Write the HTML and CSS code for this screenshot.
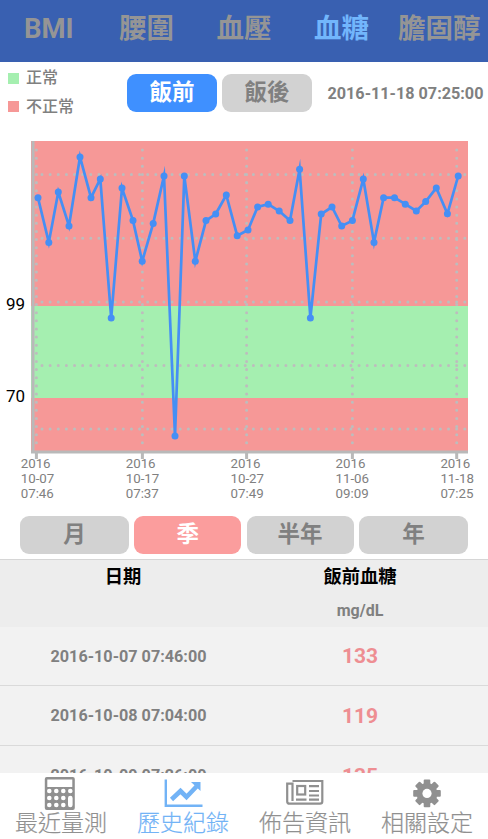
FILE: index.html
```html
<!DOCTYPE html>
<html lang="zh-Hant">
<head>
<meta charset="utf-8">
<title>血糖</title>
<link rel="stylesheet" href="styles.css">
</head>
<body>
<div class="app">
  <header class="tabs">
    <span class="tab tab-latin">BMI</span><span class="tab">腰圍</span><span class="tab">血壓</span><span class="tab active">血糖</span><span class="tab">膽固醇</span>
  </header>
  <section class="filter">
    <div class="legend">
      <div class="key"><i class="swatch ok"></i>正常</div>
      <div class="key"><i class="swatch bad"></i>不正常</div>
    </div>
    <div class="meal">
      <button class="btn blue">飯前</button>
      <button class="btn">飯後</button>
    </div>
    <div class="stamp">2016-11-18 07:25:00</div>
  </section>
  <svg class="chart" viewBox="0 130 488 374" width="488" height="374">
    <rect x="31" y="141" width="437" height="311" fill="#f69897"/>
    <rect x="31" y="306" width="437" height="92" fill="#a5efb0"/>
    <g class="grid">
      <path d="M42 174.5H468M42 238.3H468M42 302H468M42 365.5H468M42 429H468"/>
      <path d="M36.4 150.1V448M142.4 150.1V448M246.6 150.1V448M352.4 150.1V448M456.7 150.1V448"/>
    </g>
    <path d="M33 141V453M31 452H468" class="axis"/>
    <path d="M36.4 452V459M142.4 452V459M246.6 452V459M352.4 452V459M456.7 452V459" class="tick"/>
    <defs><marker id="dot" viewBox="-4 -4 8 8" markerWidth="8" markerHeight="8" markerUnits="userSpaceOnUse"><circle r="3.5" fill="#458ff5"/></marker></defs>
    <polyline class="line" points="38,197.7 48.8,242.4 58.3,192 69,226 80,157 91,197.7 100.3,179 111.2,318 122,188 133,220.6 142.2,261.3 153.2,223.4 164,176 175,436 184.3,176 195.3,261.3 206,220.6 215.7,214 226.3,195 237.2,235.7 248,230 257.6,207 268.2,204.2 279.2,211 290,220.6 299.6,169.2 310.4,318 321.2,214 332,207 341.7,226 352.4,220.6 363.3,179 374,242.4 383.6,197.7 394.5,197.7 405.3,204.2 416.3,211 425.7,201.6 436.3,188 447.4,213.8 458.2,176"/>
    <g class="ylab"><text x="6" y="309.7">99</text><text x="6" y="402">70</text></g>
    <g class="xlab">
      <text x="20.7" y="468.3">2016</text><text x="20.7" y="483.3">10-07</text><text x="20.7" y="498.3">07:46</text>
      <text x="125.7" y="468.3">2016</text><text x="125.7" y="483.3">10-17</text><text x="125.7" y="498.3">07:37</text>
      <text x="230.5" y="468.3">2016</text><text x="230.5" y="483.3">10-27</text><text x="230.5" y="498.3">07:49</text>
      <text x="335.5" y="468.3">2016</text><text x="335.5" y="483.3">11-06</text><text x="335.5" y="498.3">09:09</text>
      <text x="440.4" y="468.3">2016</text><text x="440.4" y="483.3">11-18</text><text x="440.4" y="498.3">07:25</text>
    </g>
  </svg>
  <div class="ranges">
    <button class="btn">月</button><button class="btn pink">季</button><button class="btn">半年</button><button class="btn">年</button>
  </div>
  <div class="thead">
    <div class="c1">日期</div>
    <div class="c2">飯前血糖<small>mg/dL</small></div>
  </div>
  <div class="rows">
    <div class="row"><span class="date">2016-10-07 07:46:00</span><span class="val">133</span></div>
    <div class="row"><span class="date">2016-10-08 07:04:00</span><span class="val">119</span></div>
    <div class="row"><span class="date">2016-10-09 07:26:00</span><span class="val">135</span></div>
  </div>
  <nav class="nav">
    <div class="item">
      <svg width="40" height="36" viewBox="0 0 40 36"><g transform="translate(-1.200 0)"><path fill="#909090" fill-rule="evenodd" d="M7 4h26a2 2 0 0 1 2 2v29a2 2 0 0 1-2 2H7a2 2 0 0 1-2-2V6a2 2 0 0 1 2-2ZM7.500 6.500v7.500h25v-7.500Z"/><g fill="#fff"><circle cx="9.500" cy="18" r="2.300"/><circle cx="16.500" cy="18" r="2.300"/><circle cx="23.500" cy="18" r="2.300"/><circle cx="30.500" cy="18" r="2.300"/><circle cx="9.500" cy="25" r="2.300"/><circle cx="16.500" cy="25" r="2.300"/><circle cx="23.500" cy="25" r="2.300"/><circle cx="9.500" cy="32" r="2.300"/><circle cx="16.500" cy="32" r="2.300"/><circle cx="23.500" cy="32" r="2.300"/><rect x="28.200" y="22.700" width="4.600" height="11.600" rx="2.300"/></g></g></svg>
      <span>最近量測</span>
    </div>
    <div class="item on">
      <svg width="40" height="36" viewBox="0 0 40 36"><path d="M2.800 6.500V32.700H39.500" fill="none" stroke="#72b3f6" stroke-width="2.400"/><path d="M8.500 26.500 17.500 18 23.500 24 33.500 13.500" fill="none" stroke="#72b3f6" stroke-width="4.600"/><path d="M28 9H37.500V18Z" fill="#72b3f6"/></svg>
      <span>歷史紀錄</span>
    </div>
    <div class="item">
      <svg width="40" height="36" viewBox="0 0 40 36"><g fill="none" stroke="#909090" stroke-width="2.200"><path d="M7.500 8H37.300V28.500Q37.300 30.700 35 30.700H4.500Q2.200 30.700 2.200 28.500V10.700H7.500V28"/><rect x="12.200" y="13" width="8" height="8.500"/><path d="M24 13.200H34M24 18H34M24 22.500H34M11 26.600H21.500M24 26.600H34"/></g></svg>
      <span>佈告資訊</span>
    </div>
    <div class="item">
      <svg width="40" height="36" viewBox="0 0 40 36"><g transform="translate(20 20.400)" fill="#909090"><g id="teeth"><rect x="-3.300" y="-13.800" width="6.600" height="27.600" rx="1"/><rect x="-3.300" y="-13.800" width="6.600" height="27.600" rx="1" transform="rotate(45)"/><rect x="-3.300" y="-13.800" width="6.600" height="27.600" rx="1" transform="rotate(90)"/><rect x="-3.300" y="-13.800" width="6.600" height="27.600" rx="1" transform="rotate(135)"/></g><circle r="10.500"/><circle r="4.600" fill="#fff"/></g></svg>
      <span>相關設定</span>
    </div>
  </nav>
</div>
</body>
</html>
```
FILE: styles.css
```css
* { box-sizing: border-box; }
body { margin: 0; font-family: Roboto, "Noto Sans CJK TC", sans-serif; background: #fff; color: #808080; }
.app { width: 488px; height: 839px; overflow: hidden; display: flex; flex-direction: column; }
.tabs { height: 62px; flex: none; display: grid; grid-template-columns: repeat(5, 1fr); background: #3960b1; padding-top: 9px; }
.tab { text-align: center; font-size: 27.5px; line-height: 40px; font-weight: 700; color: #959595; white-space: nowrap; }
.tab.active { color: #72b6fc; }
.filter { height: 68px; flex: none; display: flex; position: relative; }
.legend { width: 127px; padding: 2px 0 0 8px; }
.key { display: flex; align-items: center; height: 28.500px; font-size: 16px; font-weight: 500; line-height: 28px; }
.swatch { width: 11px; height: 11px; margin-right: 7px; }
.swatch.ok { background: #a5efb0; }
.swatch.bad { background: #f69897; }
.meal { display: flex; gap: 5px; padding-top: 12px; }
.btn { border: 0; border-radius: 9px; background: #d2d2d2; color: #808080; font: 700 22.5px/34px Roboto, "Noto Sans CJK TC", sans-serif; height: 38px; padding: 0 0 3px; }
.meal .btn { width: 90px; }
.btn.blue { background: #3f90ff; color: #fff; }
.btn.pink { background: #fb9d9d; color: #fff; }
.stamp { margin-left: 15.500px; padding-top: 22px; font-size: 16.200px; line-height: 20px; font-weight: 700; white-space: nowrap; }
.chart { display: block; flex: none; }
.grid { fill: none; stroke: #bdbdbd; stroke-width: 3; stroke-linecap: round; stroke-dasharray: 0.010 8.120; }
.axis { fill: none; stroke: #b9b9b9; stroke-width: 3; }
.tick { stroke: #b9b9b9; stroke-width: 3; }
.line { fill: none; stroke: #458ff5; stroke-width: 2.700; stroke-miterlimit: 10; marker-start: url(#dot); marker-mid: url(#dot); marker-end: url(#dot); }
.ylab { font-size: 17px; fill: #000; }
.xlab { font-size: 13.300px; fill: #808080; }
.ranges { height: 55px; flex: none; display: grid; grid-template-columns: 109px 107px 107px 109px; column-gap: 5.300px; padding: 12px 20px 0; }
.thead { height: 68px; flex: none; background: #ededed; border-top: 1px solid #d6d6d6; display: grid; grid-template-columns: 232px 256px; color: #000; font-size: 18.300px; line-height: 26px; font-weight: 700; text-align: center; padding-top: 4px; }
.c1 { padding-left: 14px; }
.c2 small { display: block; font-size: 16px; line-height: 20px; margin-top: 11px; color: #808080; }
.rows { height: 146px; flex: none; overflow: hidden; background: #f2f2f2; }
.row { height: 60px; border-bottom: 1px solid #dadada; display: grid; grid-template-columns: 232px 256px; align-items: center; text-align: center; font-weight: 700; }
.row:first-child { height: 59px; }
.date { font-size: 16.200px; padding-left: 25px; }
.val { font-size: 21px; color: #ee8e92; }
.nav { flex: 1; display: grid; grid-template-columns: repeat(4, 122px); background: #fff; }
.item { display: flex; flex-direction: column; align-items: center; font-size: 23px; line-height: 30px; font-weight: 300; -webkit-text-stroke: 0.200px currentColor; color: #909090; }
.item svg { display: block; flex: none; overflow: visible; }
.item.on { color: #72b3f6; }
```
